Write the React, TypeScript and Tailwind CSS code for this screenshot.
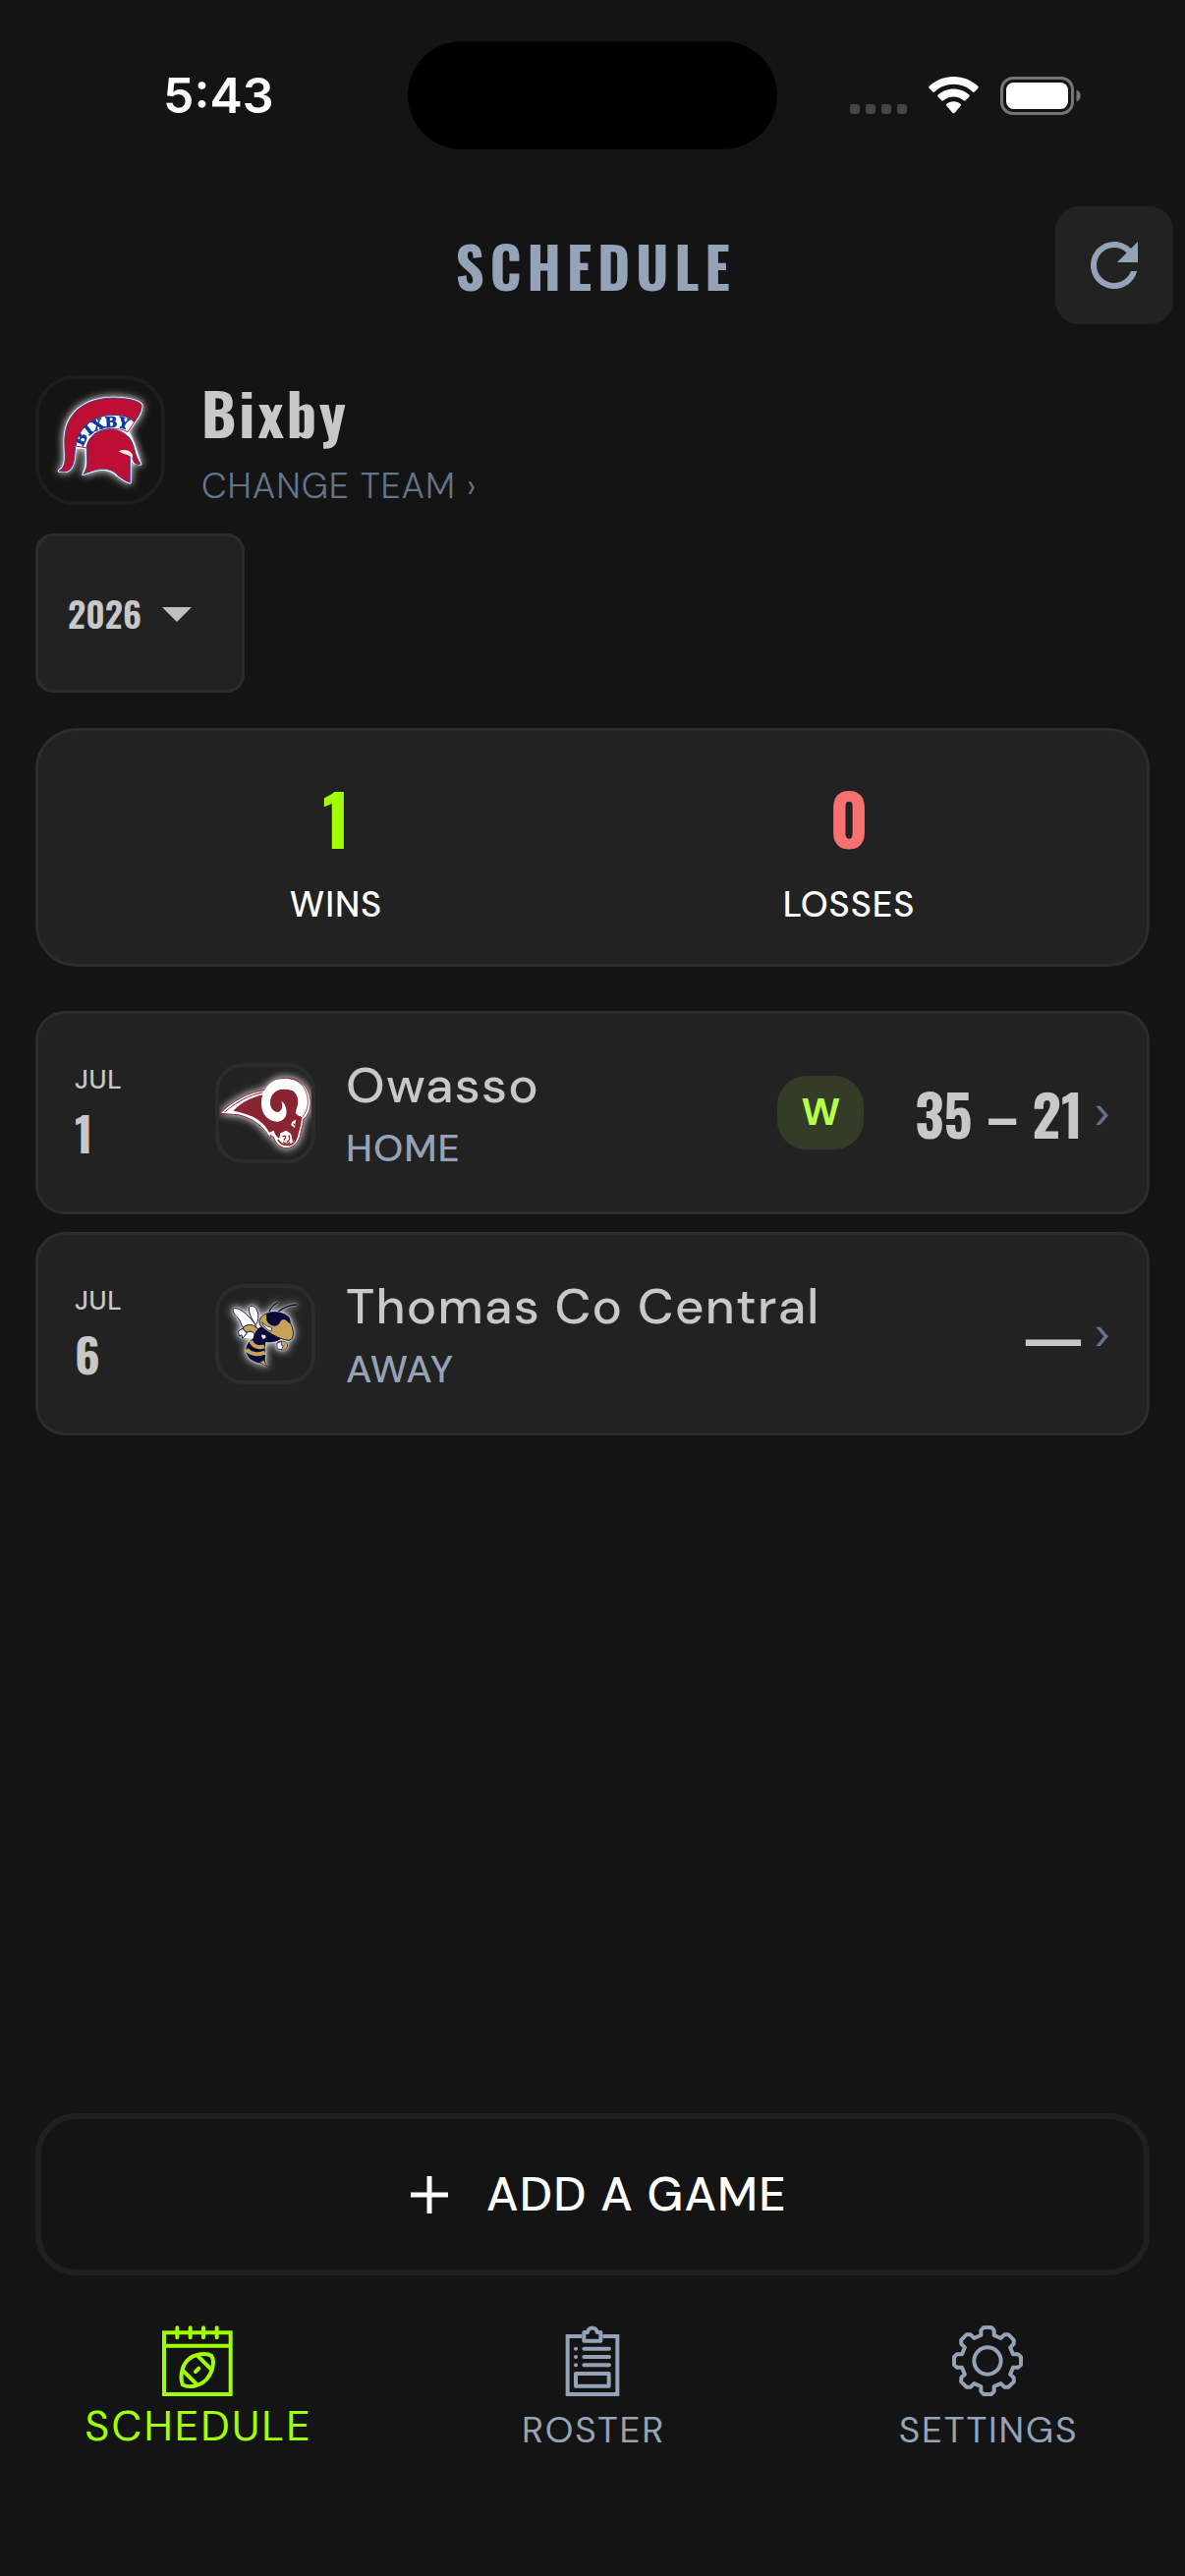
import React from "react";

const DISPLAY = "font-['Oswald',sans-serif] font-bold";

/* ---------- status bar ---------- */

function StatusBar() {
  return (
    <div className="grid grid-cols-[1fr_376px_1fr] items-center pt-[42px] text-white">
      <div className="pl-[166px] font-['Inter',sans-serif] text-[50px] leading-[60px] font-semibold">5:43</div>
      <div className="h-[110px] rounded-full bg-black" />
      <div className="flex items-center justify-end gap-[22px] pr-[106px]">
        <svg viewBox="0 0 58 38" className="h-[38px] w-[58px]" fill="#464646" aria-hidden="true">
          <rect x="0" y="28" width="10" height="10" rx="3" />
          <rect x="16" y="28" width="10" height="10" rx="3" />
          <rect x="32" y="28" width="10" height="10" rx="3" />
          <rect x="48" y="28" width="10" height="10" rx="3" />
        </svg>
        <svg viewBox="0 0 51 38" className="h-[38px] w-[51px]" fill="#fff" aria-label="Wi-Fi">
          <path d="M25.500 0C35 0 43.800 3.600 50.300 9.800C50.900 10.400 50.900 11.200 50.400 11.800L46.800 15.500C46.300 16 45.500 16 44.900 15.500C39.700 10.600 32.900 7.800 25.500 7.800S11.300 10.600 6.100 15.500C5.500 16 4.700 16 4.200 15.500L.6 11.800C.1 11.200.1 10.400.7 9.800C7.200 3.600 16 0 25.500 0Z" />
          <path d="M25.500 12.500C31.600 12.500 37.100 14.800 41.300 18.600C41.900 19.200 41.900 20.100 41.400 20.600L37.700 24.300C37.200 24.800 36.300 24.800 35.700 24.300C33 21.900 29.400 20.400 25.500 20.400S18 21.900 15.300 24.300C14.700 24.800 13.800 24.800 13.300 24.300L9.600 20.600C9.100 20.100 9.100 19.200 9.700 18.600C13.900 14.800 19.400 12.500 25.500 12.500Z" />
          <path d="M25.500 25.200C28.300 25.200 30.700 26.200 32.600 27.800C33.200 28.300 33.200 29.200 32.600 29.700L26.500 36.900C26 37.500 25 37.500 24.500 36.900L18.400 29.700C17.800 29.200 17.800 28.300 18.400 27.800C20.300 26.200 22.700 25.200 25.500 25.200Z" />
        </svg>
        <svg viewBox="0 0 82 39" className="h-[39px] w-[82px]" aria-label="Battery full">
          <rect x="1.500" y="1.500" width="72" height="36" rx="11.500" fill="none" stroke="#757575" strokeWidth="3" />
          <rect x="6" y="6" width="63" height="27" rx="7.500" fill="#fff" />
          <path d="M77.500 13.500C80.300 14.600 81.800 16.800 81.800 19.500S80.300 24.400 77.500 25.500Z" fill="#757575" />
        </svg>
      </div>
    </div>
  );
}

/* ---------- team logos ---------- */

function SpartanLogo() {
  return (
    <svg viewBox="60 48 372 372" className="h-full w-full drop-shadow-[0_0_4px_#ffffff]" aria-label="Bixby logo">
      <defs>
        <path id="crest-band" d="M196 256C200 218 240 196 282 195C306 194 322 198 342 210" />
      </defs>
      <path
        d="M120 328C150 310 134 270 138 222C144 150 200 106 285 105C330 105 365 114 372 126C375 140 362 165 350 179L330 208C345 226 350 260 369 307L350 303L337 290L337 364C325 360 310 350 300 342C285 328 270 322 250 322C230 324 210 332 194 338C210 310 203 290 203 258L170 255C167 290 165 320 145 328Z"
        stroke="#fff"
        strokeWidth="8"
        strokeLinejoin="round"
        fill="#fff"
      />
      <path d="M172 252C176 205 215 160 280 157C312 157 338 162 350 179L330 209C312 200 296 199 280 199C236 200 208 224 204 258Z" fill="#fff" stroke="#bd0f33" strokeWidth="3" />
      <text fill="#0a37a0" stroke="#0a37a0" strokeWidth="2" className="font-['DejaVu_Serif',serif] text-[45px] font-bold">
        <textPath href="#crest-band">BIXBY</textPath>
      </text>
      <g fill="#bd0f33" stroke="#273b9d" strokeWidth="2.500" strokeLinejoin="round">
        <path d="M120 328C150 310 134 270 138 222C144 150 200 106 285 105C330 105 365 114 372 126C375 140 362 165 350 179C336 161 310 157 280 157C210 160 174 212 170 255C167 290 166 318 148 327C138 331 126 330 120 328Z" />
        <path d="M194 338C212 315 204 290 205 262C208 222 240 202 280 201C324 204 344 232 350 260C354 280 362 295 369 307C362 309 354 307 350 303C345 292 342 282 337 281L337 364C325 360 310 350 300 342C288 327 270 322 250 322C230 324 210 332 194 338Z" />
      </g>
      <path d="M303 268C312 262 330 263 338 270C345 275 347 285 344 290C338 278 318 279 303 268Z" fill="#f6e8ee" />
    </svg>
  );
}

function RamLogo() {
  return (
    <svg viewBox="39 46 282 282" className="h-full w-full drop-shadow-[0_0_4px_#ffffff]" aria-label="Owasso logo">
      <path
        d="M42 188C80 149 130 122 178 117C190 94 215 80 245 80C292 82 320 116 318 160C316 184 308 196 297 205C296 222 290 236 286 258C278 286 258 294 242 294C226 292 214 280 209 270L205 260L196 254L194 263C178 232 146 202 96 192Z"
        fill="#fff"
        stroke="#8c2432"
        strokeWidth="3"
        strokeLinejoin="round"
      />
      <path d="M56 184C92 153 134 130 172 124" fill="none" stroke="#8c2432" strokeWidth="3" />
      <path d="M82 180C108 153 140 138 174 131L200 150L250 150L262 180L292 200C290 206 290 216 288 226C282 238 280 252 274 264L264 275L258 250L244 240L228 248L222 264C214 258 208 250 206 240L192 246C176 214 142 190 82 180Z" fill="#892433" />
      <ellipse cx="238" cy="156" rx="46" ry="46" fill="#892433" />
      <path d="M226 86C272 80 306 110 308 150C308 176 298 192 284 197C276 192 272 186 274 178C286 150 280 120 250 112C240 108 226 112 216 117Z" fill="#fff" />
      <path d="M220 84C190 88 168 122 168 158C168 192 190 213 216 213C240 212 250 190 242 168C239 158 234 153 229 152C234 164 232 182 218 184C204 184 194 170 195 152C196 130 212 115 234 114C246 114 254 114 262 119L258 90C244 84 232 82 220 84Z" fill="#fff" />
      <path d="M252 81C293 86 312 122 310 158C308 178 300 192 292 200" fill="none" stroke="#8c2432" strokeWidth="2.500" />
      <path d="M274 208C266 209 259 214 259 224L270 232C272 224 270 216 274 208ZM264 218L271 221L268 226Z" fill="#fff" fillRule="evenodd" />
      <path d="M226 264C222 248 228 243 236 248C238 238 246 238 248 247C258 246 262 256 258 270C252 284 234 284 226 264Z" fill="#fff" />
      <path d="M234 258C244 252 244 262 237 268M252 256C256 264 252 272 247 275M236 276C242 282 250 281 254 277" fill="none" stroke="#892433" strokeWidth="4" strokeLinecap="round" />
      <path d="M282 236C278 252 276 266 268 276C258 288 230 288 220 270" fill="none" stroke="#892433" strokeWidth="5" strokeLinecap="round" />
    </svg>
  );
}

function HornetLogo() {
  const navy = "#080a3a";
  const gold = "#c6a356";
  return (
    <svg viewBox="39 46 282 282" className="h-full w-full [filter:drop-shadow(0_0_1px_#fff)_drop-shadow(0_0_4px_#fff)]" aria-label="Thomas Co Central logo">
      <path d="M110 160L152 160L150 190L130 200L112 196Z" fill="#fff" />
      <g fill="#fff" stroke={navy} strokeWidth="3" strokeLinejoin="round">
        <path d="M82 110C92 102 112 116 126 130C142 146 150 156 152 166C138 158 122 160 112 166C105 160 106 146 97 138C88 130 80 120 82 110Z" />
        <path d="M131 104C140 94 155 106 158 125C160 142 156 152 151 158C138 142 127 120 131 104Z" />
        <path d="M97 178L113 168L124 184L110 200L108 190L100 192Z" />
      </g>
      <path d="M112 168C120 157 140 154 152 166C163 174 167 182 160 192L146 196C150 184 142 180 132 178C124 184 116 180 112 168Z" fill={gold} stroke={navy} strokeWidth="3" />
      <path d="M143 200C146 184 154 172 166 164L228 202C212 212 196 213 182 211C178 222 180 240 180 256C178 268 180 278 184 285L172 277C150 274 128 266 122 244C118 228 126 210 143 200Z" fill={navy} />
      <g fill="none" stroke={gold} strokeWidth="12">
        <path d="M136 207C140 224 160 230 177 224" />
        <path d="M122 234C134 248 160 252 179 243" />
      </g>
      <path d="M163 272L176 266L185 285C176 281 169 278 163 272Z" fill={gold} stroke={navy} strokeWidth="2" />
      <path d="M163 158C158 136 174 124 200 120C236 118 254 142 263 168C269 190 263 206 250 206C222 202 188 184 163 158Z" fill={gold} stroke={navy} strokeWidth="3" />
      <path d="M183 126C206 114 242 120 253 136C260 148 256 158 251 152C240 140 230 138 225 152C215 168 194 164 184 146Z" fill={navy} />
      <path d="M170 150C178 160 190 166 200 167L198 178C186 174 174 164 170 150Z" fill="#fff" stroke={navy} strokeWidth="2" />
      <path d="M176 190L170 188L168 194L174 203L182 197L180 189Z" fill="#e4e4ee" />
      <g fill="none" stroke={navy} strokeLinecap="round">
        <path d="M192 118Q200 100 217 91" strokeWidth="4" />
        <path d="M222 117Q245 98 275 97" strokeWidth="5" />
      </g>
      <path d="M216 212C224 206 242 206 247 216C250 228 244 234 234 236L218 231Z" fill={gold} stroke={navy} strokeWidth="2" />
      <path d="M216 214L230 210L228 220L235 222L229 234L216 231Z" fill="#fff" stroke={navy} strokeWidth="2" />
    </svg>
  );
}

/* ---------- tab icons ---------- */

function CalendarIcon() {
  return (
    <svg viewBox="75 51 216 216" className="size-[72px]" fill="none" stroke="currentColor" strokeWidth="12" aria-hidden="true">
      <path d="M81 73H284V261H81ZM81 113H284" />
      <path d="M121 58V88M161 58V88M201 58V88M242 58V88" strokeLinecap="round" />
      <path d="M152 158C174 136 212 134 226 144C236 160 230 194 210 216C190 238 152 242 138 232C130 214 132 180 152 158Z" />
      <path d="M182 142L227 187M137 187L182 232" />
      <path d="M177 192L187 182" strokeLinecap="round" />
    </svg>
  );
}

function ClipboardIcon() {
  return (
    <svg viewBox="80 51 216 216" className="size-[72px]" fill="none" stroke="currentColor" strokeWidth="12" aria-hidden="true">
      <path d="M156 84H112V261H264V84H219" />
      <path d="M162 98V72H173C175 54 200 54 202 72H213V98Z" strokeLinejoin="round" />
      <path d="M162 122H239M162 147H239M162 172H239M137 122h.1M137 147h.1M137 172h.1" strokeLinecap="round" />
      <rect x="137" y="198" width="101" height="38" strokeLinejoin="round" />
    </svg>
  );
}

const GEAR_ANGLES = [0, 45, 90, 135, 180, 225, 270, 315];

function gearPath() {
  const tooth: Array<[number, number]> = [
    [-20, -78],
    [-20, -93],
    [-12, -102],
    [12, -102],
    [20, -93],
    [20, -78],
  ];
  const points = GEAR_ANGLES.flatMap((deg) => {
    const a = (deg * Math.PI) / 180;
    return tooth.map(([x, y]) => `${(x * Math.cos(a) - y * Math.sin(a)).toFixed(1)} ${(x * Math.sin(a) + y * Math.cos(a)).toFixed(1)}`);
  });
  return `M${points.join("L")}Z`;
}

function GearIcon() {
  return (
    <svg viewBox="-108 -108 216 216" className="size-[72px]" fill="none" stroke="currentColor" strokeWidth="12" strokeLinejoin="round" aria-hidden="true">
      <path d={gearPath()} />
      <circle r="41" />
    </svg>
  );
}

/* ---------- content ---------- */

function Stat({ value, label, color }: { value: number; label: string; color: string }) {
  return (
    <div className="flex flex-col items-center">
      <span className={`${DISPLAY} text-[72px] leading-[98px] ${color}`}>{value}</span>
      <span className="mt-[18px] text-[36px] leading-[44px] font-medium tracking-wide text-white">{label}</span>
    </div>
  );
}

type Game = {
  month: string;
  day: number;
  opponent: string;
  venue: string;
  logo: React.ReactNode;
  result?: string;
  score: string;
};

const GAMES: Game[] = [
  { month: "JUL", day: 1, opponent: "Owasso", venue: "HOME", logo: <RamLogo />, result: "W", score: "35 – 21" },
  { month: "JUL", day: 6, opponent: "Thomas Co Central", venue: "AWAY", logo: <HornetLogo />, score: "—" },
];

function GameRow({ game }: { game: Game }) {
  return (
    <li>
      <button type="button" className="flex h-[207px] w-full items-center rounded-[30px] border-[3px] border-[#2b2c2d] bg-[#222222] px-[37px] text-left">
        <span className="flex w-[143px] flex-col text-[#c8c8c8]">
          <span className="text-[27px] leading-[40px] font-medium tracking-wide">{game.month}</span>
          <span className={`${DISPLAY} text-[48px] leading-[68px]`}>{game.day}</span>
        </span>
        <span className="size-[102px] shrink-0 overflow-hidden rounded-[28px] border-[4px] border-[#2a2c2e]">{game.logo}</span>
        <span className="ml-[31px] flex flex-1 flex-col">
          <span className="text-[51px] leading-[64px] font-medium tracking-wide text-[#c8c8c8]">{game.opponent}</span>
          <span className="mt-2 text-[39px] leading-[48px] font-medium tracking-wide text-[#94a3b8]">{game.venue}</span>
        </span>
        {game.result && (
          <span className="mr-[52px] flex h-[75px] w-[88px] items-center justify-center rounded-[30px] bg-[#343c28] text-[39px] font-bold text-[#b5ff4d]">{game.result}</span>
        )}
        <span className={`${DISPLAY} text-[57px] leading-[84px] text-[#c8c8c8]`}>{game.score}</span>
        <span className="ml-3 font-['Inter',sans-serif] text-[42px] leading-[48px] text-[#64748b]">›</span>
      </button>
    </li>
  );
}

function Tab({ icon, label, active }: { icon: React.ReactNode; label: string; active?: boolean }) {
  return (
    <a href="#" aria-current={active ? "page" : undefined} className={active ? "flex flex-col items-center text-[#a2ff00]" : "flex flex-col items-center text-[#94a3b8]"}>
      {icon}
      <span className={active ? "mt-1 pl-0.5 text-[43px] leading-[52px] tracking-wider" : "mt-2 pl-0.5 text-[37px] leading-[52px] tracking-wider"}>{label}</span>
    </a>
  );
}

export default function App() {
  return (
    <div className="flex min-h-screen flex-col bg-[#141414] font-['DM_Sans','Inter',sans-serif]">
      <StatusBar />

      <header className="mt-[58px] grid grid-cols-[1fr_auto_1fr] items-center px-3">
        <h1 className={`${DISPLAY} col-start-2 pl-1.5 text-[57px] leading-[84px] tracking-widest text-[#94a3b8]`}>SCHEDULE</h1>
        <button type="button" aria-label="Refresh" className="flex size-[120px] items-center justify-center justify-self-end rounded-[24px] bg-[#222222] text-[#94a3b8]">
          <svg viewBox="0 0 24 24" className="size-[72px]" fill="currentColor" aria-hidden="true">
            <path d="M17.650 6.350C16.200 4.900 14.210 4 12 4c-4.420 0-7.990 3.580-7.990 8s3.570 8 7.990 8c3.730 0 6.840-2.550 7.730-6h-2.080c-.82 2.330-3.040 4-5.650 4-3.310 0-6-2.690-6-6s2.690-6 6-6c1.660 0 3.140.69 4.220 1.780L13 11h7V4l-2.350 2.350z" />
          </svg>
        </button>
      </header>

      <main className="flex flex-1 flex-col px-9">
        <section className="mt-[52px] flex items-center">
          <div className="size-[132px] overflow-hidden rounded-[40px] border-[4px] border-[#1b1d1f]">
            <SpartanLogo />
          </div>
          <div className="ml-[37px] flex flex-col items-start">
            <h2 className={`${DISPLAY} text-[60px] leading-[74px] tracking-wider text-[#c8c8c8]`}>Bixby</h2>
            <button type="button" className="mt-5 text-[36px] leading-[38px] font-light tracking-wide text-[#64748b]">CHANGE TEAM ›</button>
          </div>
        </section>

        <div className="relative mt-[29px] self-start">
          <select aria-label="Season" defaultValue="2026" className="h-[162px] w-[213px] appearance-none rounded-[18px] border-[3px] border-[#2b2c2d] bg-[#222222] pl-[30px] font-['Oswald',sans-serif] text-[36px] font-semibold text-[#c8c8c8]">
            <option>2026</option>
            <option>2025</option>
          </select>
          <svg viewBox="0 0 30 15" className="pointer-events-none absolute top-[75px] right-[54px] h-[15px] w-[30px]" fill="#c0c0c0" aria-hidden="true">
            <path d="M0 0H30L15 15Z" />
          </svg>
        </div>

        <section className="mt-9 grid h-[243px] grid-cols-2 items-center rounded-[42px] border-[3px] border-[#2b2c2d] bg-[#222222] px-[42px]">
          <Stat value={1} label="WINS" color="text-[#a2ff00]" />
          <Stat value={0} label="LOSSES" color="text-[#f87171]" />
        </section>

        <ul className="mt-[45px] flex flex-col gap-[18px]">
          {GAMES.map((game) => (
            <GameRow key={game.opponent} game={game} />
          ))}
        </ul>

        <button type="button" className="mt-auto flex h-[165px] items-center justify-center gap-[38px] rounded-[42px] border-[6px] border-[#1e2022] pl-3 text-[48px] font-medium tracking-wide text-white">
          <svg viewBox="0 0 40 40" className="size-10" stroke="currentColor" strokeWidth="5" aria-hidden="true">
            <path d="M20 1V39M1 20H39" />
          </svg>
          ADD A GAME
        </button>
      </main>

      <nav className="mt-[51px] grid grid-cols-3 pb-[123px]">
        <Tab icon={<CalendarIcon />} label="SCHEDULE" active />
        <Tab icon={<ClipboardIcon />} label="ROSTER" />
        <Tab icon={<GearIcon />} label="SETTINGS" />
      </nav>
    </div>
  );
}
